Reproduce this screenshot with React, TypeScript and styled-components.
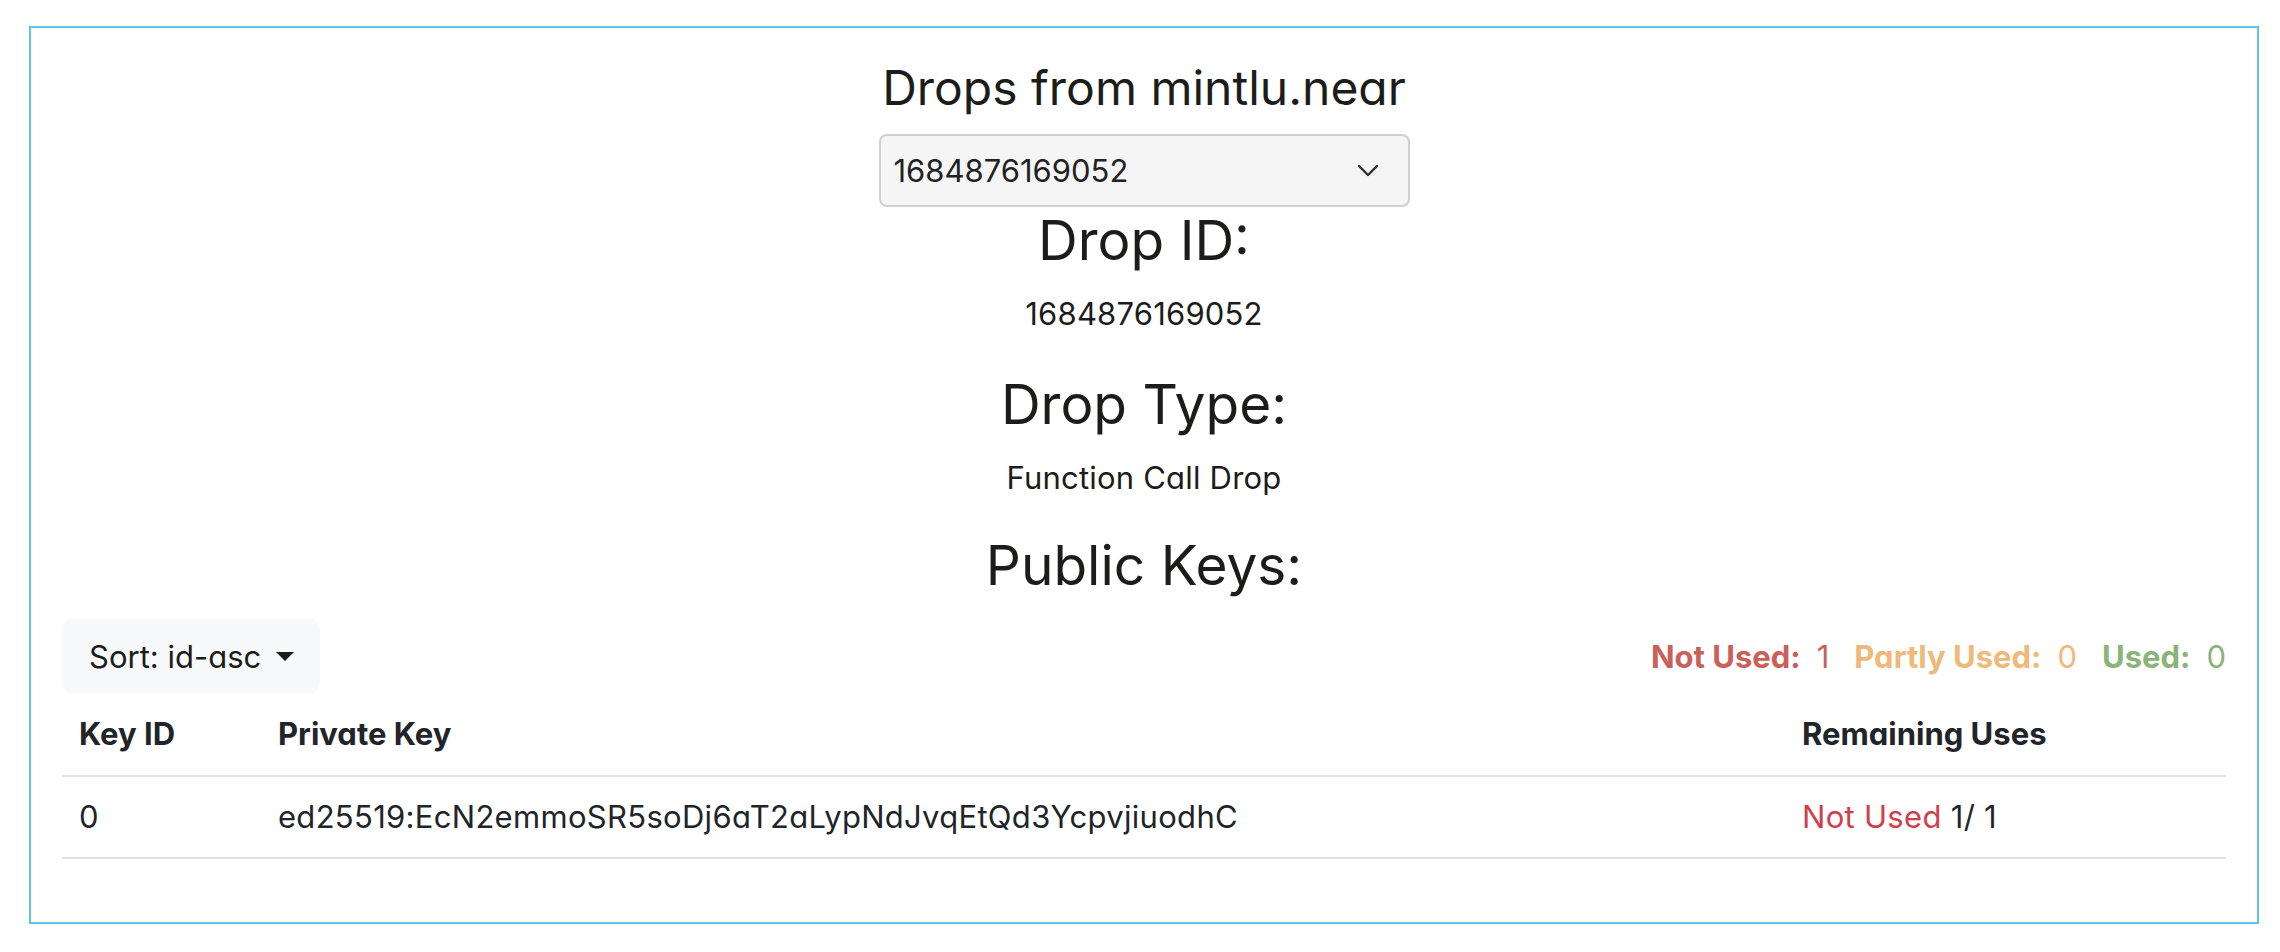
import React from "react";
import styled, { createGlobalStyle } from "styled-components";

const GlobalStyle = createGlobalStyle`
  html, body {
    margin: 0;
    padding: 0;
    background: #ffffff;
  }
  body {
    font-family: Inter, "Noto Sans", "Liberation Sans", sans-serif;
    font-feature-settings: "cv11" 1;
    color: #1c1c1a;
  }
  * { box-sizing: border-box; }
`;

const Page = styled.div`
  padding: 26px 21px 0 29px;
`;

const Card = styled.section`
  border: 2px solid #5ec3e9;
  padding: 32px 31px 63px 31px;
  display: flex;
  flex-direction: column;
  align-items: center;
`;

const Title = styled.h1`
  margin: 0;
  font-size: 48px;
  font-weight: 400;
  line-height: 1.15;
  text-align: center;
`;

const SelectBox = styled.div`
  margin-top: 19px;
  width: 531px;
  height: 73px;
  border: 2px solid #cfcfcf;
  border-radius: 8px;
  background: #f5f5f5;
  display: flex;
  align-items: center;
  justify-content: space-between;
  padding: 0 29px 0 13px;
  font-size: 31px;
  color: #222;
`;

const Heading = styled.h2<{ $gap?: number }>`
  margin: ${(p) => p.$gap ?? 0}px 0 0 0;
  font-size: 55px;
  font-weight: 400;
  line-height: 1.2;
  text-align: center;
`;

const Value = styled.p`
  margin: 18px 0 0 0;
  font-size: 31px;
  line-height: 1.5;
  text-align: center;
  letter-spacing: 0.2px;
`;

const Toolbar = styled.div`
  margin-top: 20px;
  align-self: stretch;
  display: flex;
  align-items: center;
  justify-content: space-between;
`;

const SortButton = styled.button`
  display: inline-flex;
  align-items: center;
  gap: 15px;
  height: 76px;
  padding: 0 26px 0 27px;
  border: none;
  border-radius: 12px;
  background: #f8f9fa;
  font-family: inherit;
  font-feature-settings: inherit;
  font-size: 31px;
  color: #1c1c1a;
  cursor: pointer;
`;

const Caret = styled.span`
  display: inline-block;
  width: 0;
  height: 0;
  border-top: 9px solid #1c1c1a;
  border-left: 9px solid transparent;
  border-right: 9px solid transparent;
`;

const Stats = styled.div`
  display: flex;
  align-items: baseline;
  gap: 25px;
  font-size: 31px;
`;

const Stat = styled.span<{ $color: string }>`
  color: ${(p) => p.$color};
  display: inline-flex;
  gap: 16px;
  align-items: baseline;
`;

const StatLabel = styled.b`
  font-weight: 700;
`;

const Table = styled.table`
  align-self: stretch;
  border-collapse: collapse;
  font-size: 31px;
  color: #212529;
  table-layout: fixed;
  width: 100%;
`;

const Th = styled.th<{ $w?: number }>`
  text-align: left;
  font-weight: 700;
  padding: 17px;
  line-height: 1.5;
  border-bottom: 2px solid #dee2e6;
  ${(p) => (p.$w ? `width: ${p.$w}px;` : "")}
`;

const Td = styled.td`
  text-align: left;
  padding: 17px;
  line-height: 1.5;
  border-bottom: 2px solid #dee2e6;
  white-space: nowrap;
  letter-spacing: 0.3px;
`;

const Danger = styled.span`
  color: #d0404b;
`;

const Chevron = () => (
  <svg width="22" height="13" viewBox="0 0 22 13" fill="none">
    <path d="M2 2 L11 11 L20 2" stroke="#2b2b2b" strokeWidth="2.4" strokeLinecap="round" strokeLinejoin="round" />
  </svg>
);

export default function App() {
  return (
    <>
      <GlobalStyle />
      <Page>
        <Card>
          <Title>Drops from mintlu.near</Title>
          <SelectBox>
            <span>1684876169052</span>
            <Chevron />
          </SelectBox>
          <Heading>Drop ID:</Heading>
          <Value>1684876169052</Value>
          <Heading $gap={33}>Drop Type:</Heading>
          <Value>Function Call Drop</Value>
          <Heading $gap={31}>Public Keys:</Heading>
          <Toolbar>
            <SortButton>
              Sort: id-asc
              <Caret />
            </SortButton>
            <Stats>
              <Stat $color="#c9605a">
                <StatLabel>Not Used:</StatLabel>1
              </Stat>
              <Stat $color="#eeb97a">
                <StatLabel>Partly Used:</StatLabel>0
              </Stat>
              <Stat $color="#8ab47a">
                <StatLabel>Used:</StatLabel>0
              </Stat>
            </Stats>
          </Toolbar>
          <Table>
            <thead>
              <tr>
                <Th $w={199}>Key ID</Th>
                <Th>Private Key</Th>
                <Th $w={441}>Remaining Uses</Th>
              </tr>
            </thead>
            <tbody>
              <tr>
                <Td>0</Td>
                <Td>ed25519:EcN2emmoSR5soDj6aT2aLypNdJvqEtQd3YcpvjiuodhC</Td>
                <Td>
                  <Danger>Not Used</Danger> 1/ 1
                </Td>
              </tr>
            </tbody>
          </Table>
        </Card>
      </Page>
    </>
  );
}
